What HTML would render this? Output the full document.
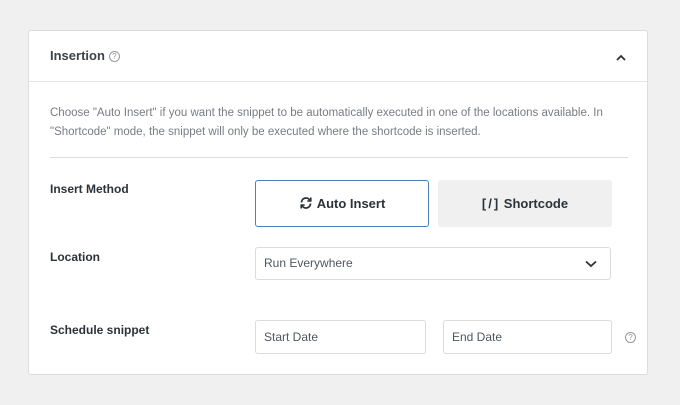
<!DOCTYPE html>
<html><head><style>
body{margin:0;width:680px;height:405px;background:#f0f0f1;font-family:"Liberation Sans",sans-serif;position:relative;overflow:hidden;color:#3c434a}
.p{position:absolute;left:28px;top:30px;width:618px;height:343px;background:#fff;border:1px solid #dcdcde;border-radius:3px}
.a{position:absolute}
.h{left:21px;top:17px;font-size:13px;font-weight:bold;color:#3c434a}
.q{display:inline-block;width:9px;height:9px;border:1px solid #999;border-radius:50%;font-size:8px;line-height:9px;text-align:center;color:#999;font-weight:normal;vertical-align:1px;margin-left:4px}
.lbl{left:21px;font-size:12px;font-weight:bold;color:#2c3338}
.box{position:absolute;border:1px solid #dcdcde;border-radius:3px;box-sizing:border-box;font-size:12px;color:#50575e;padding-left:8px}
</style></head><body>
<div class="p">
<div class="a h">Insertion<span class="q">?</span></div>
<svg class="a" style="left:587px;top:23px" width="10" height="8"><path d="M1 6 L5 2 L9 6" stroke="#2c3338" stroke-width="1.8" fill="none"/></svg>
<div class="a" style="left:0;top:50px;width:618px;border-top:1px solid #e4e4e7"></div>
<div class="a" style="left:21px;top:73px;width:580px;font-size:11.5px;line-height:19px;color:#787c82">Choose "Auto Insert" if you want the snippet to be automatically executed in one of the locations available. In "Shortcode" mode, the snippet will only be executed where the shortcode is inserted.</div>
<div class="a" style="left:21px;top:126px;width:578px;border-top:1px solid #dcdcde"></div>
<div class="a lbl" style="top:151px">Insert Method</div>
<div class="a lbl" style="top:219px">Location</div>
<div class="a lbl" style="top:292px">Schedule snippet</div>
<div class="box" style="left:226px;top:149px;width:174px;height:47px;border-color:#4f7bbf;text-align:center;line-height:45px;font-size:13px;font-weight:bold;color:#2c3338;padding:0">
<svg width="14" height="14" viewBox="0 0 14 14" style="vertical-align:-2px;margin-right:4px"><path d="M2.5 6.5A4.5 4.5 0 0 1 11 4.5M11.5 7.5A4.5 4.5 0 0 1 3 9.5" stroke="#2c3338" stroke-width="1.8" fill="none"/><path d="M11.8 1.5V5H8.3M2.2 12.5V9H5.7" stroke="#2c3338" stroke-width="1.6" fill="none"/></svg>Auto Insert</div>
<div class="box" style="left:409px;top:149px;width:174px;height:47px;border:none;background:#f0f0f1;text-align:center;line-height:47px;font-size:13px;font-weight:bold;color:#2c3338;padding:0"><span style="letter-spacing:2px">[/]</span> Shortcode</div>
<div class="box" style="left:226px;top:216px;width:356px;height:33px;line-height:31px">Run Everywhere
<svg class="a" style="left:329px;top:12px" width="12" height="8"><path d="M1 1.5 L6 6 L11 1.5" stroke="#2c3338" stroke-width="1.8" fill="none"/></svg></div>
<div class="box" style="left:226px;top:289px;width:171px;height:34px;line-height:32px">Start Date</div>
<div class="box" style="left:414px;top:289px;width:169px;height:34px;line-height:32px">End Date</div>
<span class="a q" style="left:592px;top:301px">?</span>
</div>
</body></html>
